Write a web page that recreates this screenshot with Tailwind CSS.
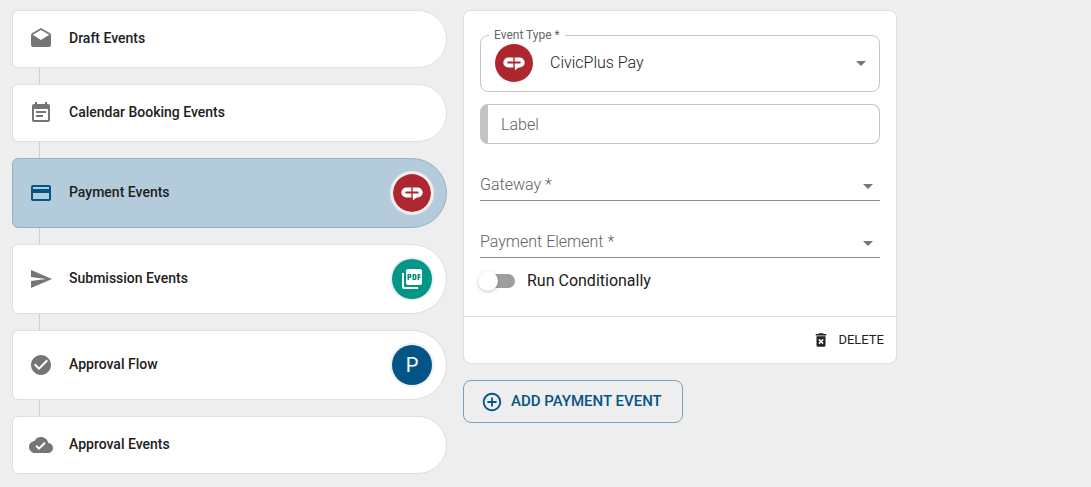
<!DOCTYPE html>
<html lang="en">
  <head>
    <meta charset="UTF-8" />
    <meta name="viewport" content="width=device-width" />
    <script src="https://cdn.jsdelivr.net/npm/@tailwindcss/browser@4"></script>
    <title>Workflow Events</title>
  </head>
  <body class="bg-[#eeeeee] font-[Roboto,sans-serif] text-[#212121]">
    <!-- shared CivicPlus mark -->
    <svg class="hidden">
      <symbol id="cp" viewBox="0 0 38 38">
        <circle cx="19" cy="19" r="19" fill="#ae262e" />
        <path
          fill="#fff"
          d="M13.400 13.400H24.600a5 5 0 0 1 0 10.200l-1.400.2-3.400 2.600V23.600H13.400a5.100 5.100 0 0 1 0-10.200z"
        />
        <path fill="none" stroke="#ae262e" stroke-width="2" stroke-linecap="round" d="M13.200 18.500H24.800" />
        <path fill="none" stroke="#ae262e" stroke-width="1.400" d="M19 13v14" />
      </symbol>
    </svg>

    <main class="flex items-start gap-4 px-3 py-2.5">
      <!-- steps -->
      <nav class="flex max-w-[435px] flex-1 flex-col">
        <button class="flex h-[58px] items-center gap-4 rounded-l-md rounded-r-[29px] border border-[#dedede] bg-white pr-3.5 pl-4 text-left">
          <svg class="size-6 fill-[#757575]" viewBox="0 0 24 24">
            <path d="M21.99 8c0-.72-.37-1.35-.94-1.7L12 1 2.95 6.3C2.38 6.65 2 7.28 2 8v10c0 1.1.9 2 2 2h16c1.1 0 2-.9 2-2l-.01-10zM12 13L3.74 7.84 12 3l8.26 4.84L12 13z" />
          </svg>
          <span class="flex-1 pb-0.5 text-sm font-medium">Draft Events</span>
        </button>
        <div class="ml-[27px] h-4 w-px bg-[#cfcfcf]"></div>

        <button class="flex h-[58px] items-center gap-4 rounded-l-md rounded-r-[29px] border border-[#dedede] bg-white pr-3.5 pl-4 text-left">
          <svg class="size-6 fill-[#757575]" viewBox="0 0 24 24">
            <path d="M17 10H7v2h10v-2zm2-7h-1V1h-2v2H8V1H6v2H5c-1.11 0-1.99.9-1.99 2L3 19c0 1.1.89 2 2 2h14c1.1 0 2-.9 2-2V5c0-1.1-.9-2-2-2zm0 16H5V8h14v11zm-5-5H7v2h7v-2z" />
          </svg>
          <span class="flex-1 pb-0.5 text-sm font-medium">Calendar Booking Events</span>
        </button>
        <div class="ml-[27px] h-4 w-px bg-[#cfcfcf]"></div>

        <button aria-current="step" class="flex h-[70px] items-center gap-4 rounded-l-md rounded-r-[35px] border border-[#96b1c2] bg-[#b4cbdc] pr-3 pl-4 text-left">
          <svg class="size-6 fill-[#045587]" viewBox="0 0 24 24">
            <path d="M20 4H4c-1.11 0-1.99.89-1.99 2L2 18c0 1.11.89 2 2 2h16c1.11 0 2-.89 2-2V6c0-1.11-.89-2-2-2zm0 14H4v-6h16v6zm0-10H4V6h16v2z" />
          </svg>
          <span class="flex-1 pb-0.5 text-sm font-medium">Payment Events</span>
          <svg class="size-11 rounded-full bg-[#eeeeee] p-[3px]"><use href="#cp" /></svg>
        </button>
        <div class="ml-[27px] h-4 w-px bg-[#cfcfcf]"></div>

        <button class="flex h-[70px] items-center gap-4 rounded-l-md rounded-r-[35px] border border-[#dedede] bg-white pr-3.5 pl-4 text-left">
          <svg class="size-6 fill-[#757575]" viewBox="0 0 24 24">
            <path d="M2.01 21L23 12 2.01 3 2 10l15 2-15 2z" />
          </svg>
          <span class="flex-1 pb-0.5 text-sm font-medium">Submission Events</span>
          <span class="flex size-10 items-center justify-center rounded-full bg-[#009688] ring-2 ring-[#eeeeee]">
            <svg class="size-6 fill-white" viewBox="0 0 24 24">
              <path d="M20 2H8c-1.1 0-2 .9-2 2v12c0 1.1.9 2 2 2h12c1.1 0 2-.9 2-2V4c0-1.1-.9-2-2-2zm-8.500 7.500c0 .83-.67 1.500-1.500 1.500H9v2H7.500V7H10c.83 0 1.500.67 1.500 1.500v1zm5 2c0 .83-.67 1.500-1.500 1.500h-2.500V7H15c.83 0 1.500.67 1.500 1.500v3zm4-3H19v1h1.500V11H19v2h-1.500V7h3v1.500zM9 9.500h1v-1H9v1zM4 6H2v14c0 1.100.9 2 2 2h14v-2H4V6zm10 5.500h1v-3h-1v3z" />
            </svg>
          </span>
        </button>
        <div class="ml-[27px] h-4 w-px bg-[#cfcfcf]"></div>

        <button class="flex h-[70px] items-center gap-4 rounded-l-md rounded-r-[35px] border border-[#dedede] bg-white pr-3.5 pl-4 text-left">
          <svg class="size-6 fill-[#757575]" viewBox="0 0 24 24">
            <path d="M12 2C6.480 2 2 6.480 2 12s4.480 10 10 10 10-4.480 10-10S17.520 2 12 2zm-2 15l-5-5 1.410-1.410L10 14.170l7.590-7.590L19 8l-9 9z" />
          </svg>
          <span class="flex-1 pb-0.5 text-sm font-medium">Approval Flow</span>
          <span class="flex size-10 items-center justify-center rounded-full bg-[#045587] text-xl text-white ring-2 ring-[#eeeeee]">P</span>
        </button>
        <div class="ml-[27px] h-4 w-px bg-[#cfcfcf]"></div>

        <button class="flex h-[58px] items-center gap-4 rounded-l-md rounded-r-[29px] border border-[#dedede] bg-white pr-3.5 pl-4 text-left">
          <svg class="size-6 fill-[#757575]" viewBox="0 0 24 24">
            <path d="M19.350 10.040C18.670 6.590 15.640 4 12 4 9.110 4 6.600 5.640 5.350 8.040 2.340 8.360 0 10.910 0 14c0 3.310 2.690 6 6 6h13c2.760 0 5-2.240 5-5 0-2.640-2.050-4.780-4.650-4.960zM10 17l-3.500-3.500 1.410-1.410L10 14.170 15.180 9l1.410 1.410L10 17z" />
          </svg>
          <span class="flex-1 pb-0.5 text-sm font-medium">Approval Events</span>
        </button>
      </nav>

      <!-- event form -->
      <div class="max-w-[434px] flex-1">
        <form class="rounded-lg border border-[#dedede] bg-white">
          <div class="px-4 pt-[18px] pb-[23px]">
            <fieldset class="relative rounded-lg border border-[#c4c4c4]">
              <legend class="ml-2 px-[5px] text-xs leading-3 text-[#666666]">
                <label for="type">Event Type *</label>
              </legend>
              <div class="flex h-[50px] items-center pb-1.5 pl-3.5">
                <svg class="size-[38px] shrink-0"><use href="#cp" /></svg>
                <select id="type" class="h-10 flex-1 appearance-none bg-transparent pl-[17px] font-light outline-none">
                  <option>CivicPlus Pay</option>
                </select>
              </div>
              <svg class="pointer-events-none absolute top-2.5 right-1.5 size-6 fill-[#757575]" viewBox="0 0 24 24"><path d="M7 10l5 5 5-5z" /></svg>
            </fieldset>

            <input
              type="text"
              aria-label="Label"
              placeholder="Label"
              class="mt-3 block h-10 w-full rounded-lg border border-l-8 border-[#c4c4c4] px-[13px] font-light outline-none placeholder:text-[#616161]"
            />

            <div class="relative mt-[25px]">
              <select aria-label="Gateway" class="block h-8 w-full appearance-none border-b border-[#8d8d8d] font-light text-[#616161] outline-none">
                <option>Gateway *</option>
              </select>
              <svg class="pointer-events-none absolute top-[5px] right-0 size-6 fill-[#757575]" viewBox="0 0 24 24"><path d="M7 10l5 5 5-5z" /></svg>
            </div>

            <div class="relative mt-[25px]">
              <select aria-label="Payment Element" class="block h-8 w-full appearance-none border-b border-[#8d8d8d] font-light text-[#616161] outline-none">
                <option>Payment Element *</option>
              </select>
              <svg class="pointer-events-none absolute top-[5px] right-0 size-6 fill-[#757575]" viewBox="0 0 24 24"><path d="M7 10l5 5 5-5z" /></svg>
            </div>

            <div class="mt-[11px] flex h-6 items-center gap-3">
              <input
                id="conditional"
                type="checkbox"
                role="switch"
                class="relative ml-px h-3.5 w-[34px] appearance-none rounded-full bg-[#9e9e9e] before:absolute before:-top-[3px] before:-left-[3px] before:size-5 before:rounded-full before:bg-white before:shadow-[0_1px_3px_rgba(0,0,0,0.25)] checked:before:left-4"
              />
              <label for="conditional">Run Conditionally</label>
            </div>
          </div>

          <div class="flex h-[47px] items-center justify-end border-t border-[#dedede] pr-3">
            <button type="button" class="flex items-center gap-2 text-[13px]">
              <svg class="size-[18px] fill-[#212121]" viewBox="0 0 24 24">
                <path d="M6 19c0 1.100.9 2 2 2h8c1.100 0 2-.9 2-2V7H6v12zm2.460-7.120l1.410-1.410L12 12.590l2.120-2.120 1.410 1.410L13.410 14l2.120 2.120-1.410 1.410L12 15.410l-2.120 2.120-1.410-1.410L10.590 14l-2.130-2.120zM15.500 4l-1-1h-5l-1 1H5v2h14V4z" />
              </svg>
              DELETE
            </button>
          </div>
        </form>

        <button class="mt-4 flex h-[43px] items-center gap-2 rounded-lg border border-[#79a1bc] pr-5 pl-[17px] text-[15px] font-medium text-[#045587]">
          <svg class="size-[22px] fill-[#045587]" viewBox="0 0 24 24">
            <path d="M13 7h-2v4H7v2h4v4h2v-4h4v-2h-4V7zm-1-5C6.480 2 2 6.480 2 12s4.480 10 10 10 10-4.480 10-10S17.520 2 12 2zm0 18c-4.410 0-8-3.590-8-8s3.590-8 8-8 8 3.590 8 8-3.590 8-8 8z" />
          </svg>
          ADD PAYMENT EVENT
        </button>
      </div>
    </main>
  </body>
</html>
